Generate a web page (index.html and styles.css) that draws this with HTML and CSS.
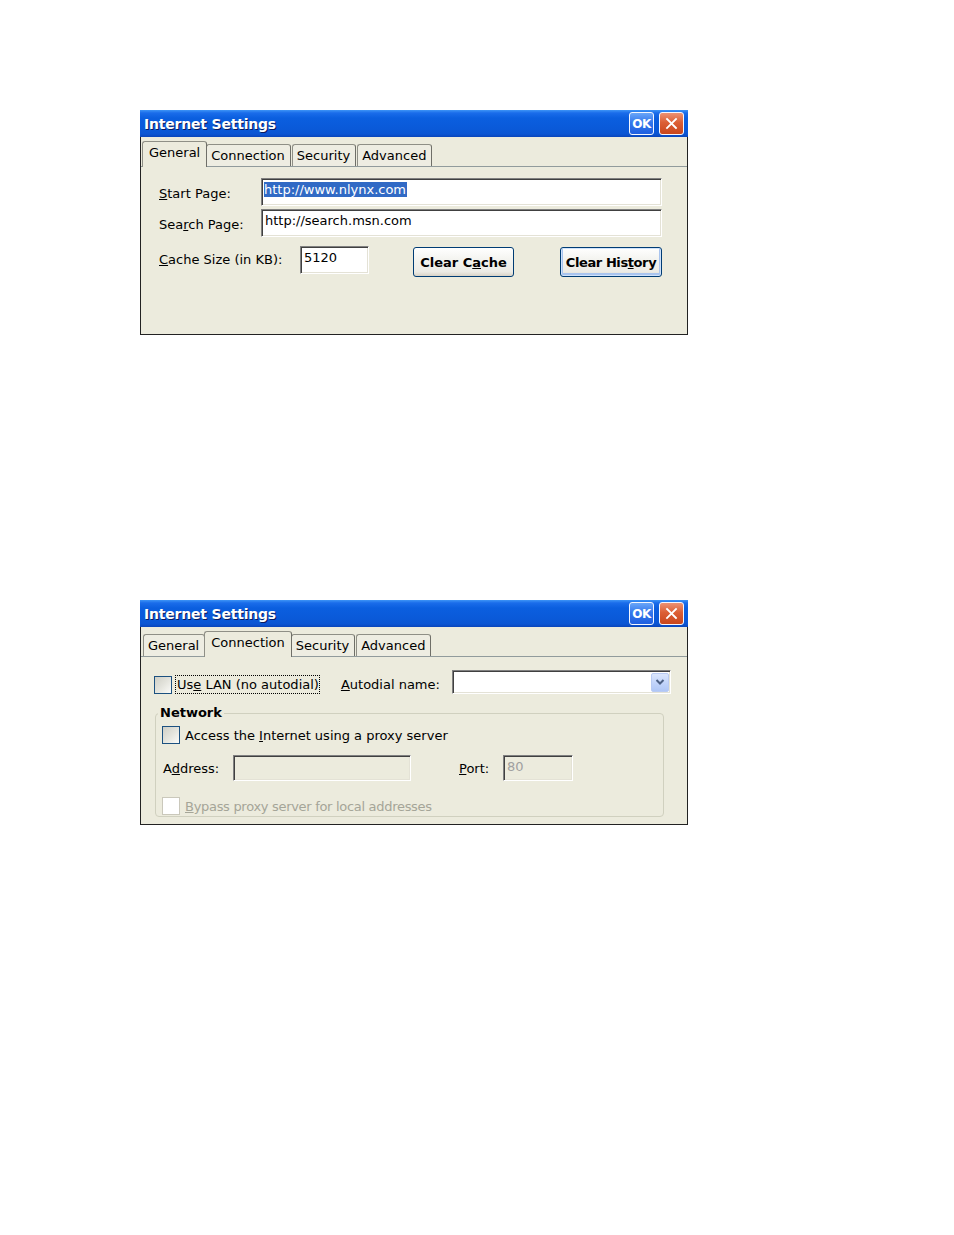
FILE: index.html
```html
<!DOCTYPE html>
<html>
<head>
<meta charset="utf-8">
<title>Internet Settings</title>
<link rel="stylesheet" href="styles.css">
</head>
<body>
<div class="page">

  <div class="dialog">
    <div class="titlebar">
      <span class="title">Internet Settings</span>
      <div class="tb-btns">
        <span class="tb-ok">OK</span>
        <span class="tb-close"><svg width="13" height="13" viewBox="0 0 13 13"><path d="M2 2 L11 11 M11 2 L2 11" stroke="#fff" stroke-width="1.8" stroke-linecap="square" fill="none"/></svg></span>
      </div>
    </div>
    <div class="frame">
      <div class="tabs">
        <span class="tab active">General</span>
        <span class="tab">Connection</span>
        <span class="tab">Security</span>
        <span class="tab">Advanced</span>
      </div>
      <div class="panel p-general">
        <div class="url-grid">
          <span class="lbl"><u>S</u>tart Page:</span>
          <div class="field"><span class="sel">http://www.nlynx.com</span></div>
          <span class="lbl">Sea<u>r</u>ch Page:</span>
          <div class="field">http://search.msn.com</div>
        </div>
        <div class="cache-row">
          <span class="cache-lbl"><u>C</u>ache Size (in KB):</span>
          <div class="field cache-field">5120</div>
          <span class="btn btn-cache">Clear C<u>a</u>che</span>
          <span class="btn btn-history">Clear His<u>t</u>ory</span>
        </div>
      </div>
    </div>
  </div>

  <div class="dialog">
    <div class="titlebar">
      <span class="title">Internet Settings</span>
      <div class="tb-btns">
        <span class="tb-ok">OK</span>
        <span class="tb-close"><svg width="13" height="13" viewBox="0 0 13 13"><path d="M2 2 L11 11 M11 2 L2 11" stroke="#fff" stroke-width="1.8" stroke-linecap="square" fill="none"/></svg></span>
      </div>
    </div>
    <div class="frame">
      <div class="tabs">
        <span class="tab">General</span>
        <span class="tab active">Connection</span>
        <span class="tab">Security</span>
        <span class="tab">Advanced</span>
      </div>
      <div class="panel p-conn">
        <div class="lan-row">
          <span class="cb lan-cb"></span>
          <span class="lan-label">Us<u>e</u> LAN (no autodial)</span>
          <span class="autodial-lbl"><u>A</u>utodial name:</span>
          <div class="field combo">
            <span class="combo-btn"><svg width="10" height="8" viewBox="0 0 10 8"><path d="M1.5 2 L5 5.5 L8.5 2" stroke="#4d6185" stroke-width="2" fill="none"/></svg></span>
          </div>
        </div>
        <fieldset class="network">
          <legend>Network</legend>
          <div class="proxy-row">
            <span class="cb"></span>
            <span class="cb-text">Access the <u>I</u>nternet using a proxy server</span>
          </div>
          <div class="addr-row">
            <span class="addr-lbl">A<u>d</u>dress:</span>
            <div class="field disabled addr-field"></div>
            <span class="port-lbl"><u>P</u>ort:</span>
            <div class="field disabled port-field">80</div>
          </div>
          <div class="bypass-row">
            <span class="cb cb-disabled"></span>
            <span class="cb-text gray"><u>B</u>ypass proxy server for local addresses</span>
          </div>
        </fieldset>
      </div>
    </div>
  </div>

</div>
</body>
</html>
```
FILE: styles.css
```css
body {
  margin: 0;
  background: #ffffff;
  font-family: "DejaVu Sans", "Noto Sans", sans-serif;
  font-size: 13px;
  color: #000;
}

.page {
  padding: 110px 0 0 140px;
}

.dialog {
  width: 548px;
  height: 225px;
  display: flex;
  flex-direction: column;
}

.dialog + .dialog {
  margin-top: 265px;
}

/* Title bar */
.titlebar {
  height: 27px;
  flex: none;
  display: flex;
  align-items: center;
  justify-content: space-between;
  padding: 0 4px;
  background: linear-gradient(to bottom, #3d94f6 0, #1a6cea 3px, #0b5fdf 8px, #0a5ad9 18px, #0b55d3 24px, #0945bb 27px);
}

.title {
  font-weight: bold;
  font-size: 14px;
  color: #fff;
  text-shadow: 1px 1px 0 #0a1a5e;
  letter-spacing: -0.2px;
}

.tb-btns {
  display: flex;
  gap: 5px;
}

.tb-ok,
.tb-close {
  width: 25px;
  height: 23px;
  box-sizing: border-box;
  border: 1px solid #f4f7ff;
  border-radius: 3px;
  display: flex;
  align-items: center;
  justify-content: center;
}

.tb-ok {
  background: linear-gradient(to bottom, #6aa6f8, #3377ec 45%, #1f5fe0);
  color: #fff;
  font-weight: bold;
  font-size: 12px;
  letter-spacing: -0.5px;
}

.tb-close {
  background: linear-gradient(to bottom, #ec9273, #dc5f35 45%, #c9461c);
}

/* Frame */
.frame {
  flex: 1;
  background: #ecebdd;
  border: 1px solid #222;
  border-top: none;
  display: flex;
  flex-direction: column;
}

.tabs {
  height: 30px;
  flex: none;
  box-sizing: border-box;
  display: flex;
  align-items: flex-end;
  gap: 1px;
  padding-left: 2px;
  border-bottom: 1px solid #919b9c;
}

.tab {
  height: 22px;
  box-sizing: border-box;
  padding: 3px 5px 0 4px;
  line-height: 16px;
  border: 1px solid #8f8f86;
  border-right-color: #6f6f68;
  border-bottom: none;
  border-radius: 3px 3px 0 0;
  background: #eeede2;
  white-space: nowrap;
}

.tab.active {
  height: 26px;
  margin: 0 -2px -1px;
  padding: 3px 6px 0;
  background: #ecebdd;
  position: relative;
}

.tab.active:first-child {
  margin-left: -1px;
}

/* Fields */
.field {
  box-sizing: border-box;
  border: 1px solid;
  border-color: #808080 #ffffff #ffffff #808080;
  box-shadow: inset 1px 1px 0 #404040, inset -1px -1px 0 #e4e2d6;
  background: #fff;
  padding: 2px 2px 0 3px;
  line-height: 17px;
  white-space: nowrap;
  overflow: hidden;
}

.field.disabled {
  background: transparent;
  color: #a0a0a0;
}

.sel {
  background: #316ac5;
  color: #fff;
  margin-left: -1px;
  padding: 0 1px 0 0;
}

/* General panel */
.p-general {
  padding: 11px 25px 0 18px;
}

.url-grid {
  display: grid;
  grid-template-columns: 102px 1fr;
  grid-auto-rows: 28px;
  row-gap: 3px;
}

.lbl {
  padding-top: 7px;
  line-height: 17px;
}

.cache-row {
  display: flex;
  align-items: flex-start;
  margin-top: 9px;
}

.cache-lbl {
  width: 141px;
  flex: none;
  padding-top: 5px;
  line-height: 17px;
}

.cache-field {
  width: 69px;
  height: 28px;
  flex: none;
}

.btn {
  height: 30px;
  box-sizing: border-box;
  margin-top: 1px;
  border: 1px solid #003c74;
  border-radius: 3px;
  background: linear-gradient(to bottom, #ffffff, #f4f4f0 40%, #ecebe5 85%, #d8d2c6);
  font-weight: bold;
  display: flex;
  align-items: center;
  justify-content: center;
  white-space: nowrap;
}

.btn-cache {
  width: 101px;
  margin-left: 44px;
}

.btn-history {
  width: 102px;
  margin-left: auto;
  letter-spacing: -0.4px;
  box-shadow: inset 0 0 0 1px #cfe2fb, inset 0 -1px 0 2px #a9c4ee;
}

/* Connection panel */
.p-conn {
  padding: 13px 0 0 13px;
}

.lan-row {
  display: flex;
  align-items: flex-start;
  height: 24px;
}

.cb {
  width: 18px;
  height: 18px;
  flex: none;
  box-sizing: border-box;
  border: 1px solid #1c5180;
  background: linear-gradient(135deg, #cfcfc6 0%, #e6e6df 55%, #fbfbf9 100%);
}

.cb.lan-cb {
  margin-top: 6px;
}

.cb.cb-disabled {
  border-color: #cac8bb;
  background: #ffffff;
}

.lan-label {
  margin: 5px 0 0 3px;
  border: 1px dotted #000;
  padding: 0 0 0 1px;
  line-height: 17px;
  white-space: nowrap;
}

.autodial-lbl {
  margin: 6px 0 0 21px;
  line-height: 17px;
  white-space: nowrap;
}

.combo {
  width: 219px;
  height: 24px;
  margin-left: 12px;
  display: flex;
  justify-content: flex-end;
  align-items: center;
  padding: 0 1px 0 0;
}

.combo-btn {
  width: 18px;
  height: 19px;
  box-sizing: border-box;
  border: 1px solid #b9cbf3;
  border-radius: 2px;
  background: linear-gradient(to bottom, #dbe6fd, #bfd2fa 60%, #b0c7f6);
  display: flex;
  align-items: center;
  justify-content: center;
}

.network {
  margin: 11px 0 0 1px;
  width: 509px;
  min-width: 0;
  box-sizing: border-box;
  border: 1px solid #d0d0bf;
  border-radius: 4px;
  padding: 0 0 1px 6px;
}

.network legend {
  margin-left: -4px;
  padding: 0 2px;
  font-weight: bold;
  line-height: 16px;
}

.proxy-row,
.bypass-row {
  display: flex;
  align-items: center;
  height: 18px;
}

.proxy-row {
  margin-top: 5px;
}

.bypass-row {
  margin-top: 16px;
}

.cb-text {
  margin-left: 5px;
  white-space: nowrap;
}

.gray {
  color: #a5a598;
  letter-spacing: -0.3px;
}

.addr-row {
  display: flex;
  align-items: center;
  height: 26px;
  margin-top: 11px;
}

.addr-lbl {
  width: 70px;
  margin-left: 1px;
  flex: none;
}

.addr-field {
  width: 178px;
  height: 26px;
  flex: none;
}

.port-lbl {
  width: 44px;
  margin-left: 48px;
  flex: none;
}

.port-field {
  width: 70px;
  height: 26px;
  flex: none;
}
```
